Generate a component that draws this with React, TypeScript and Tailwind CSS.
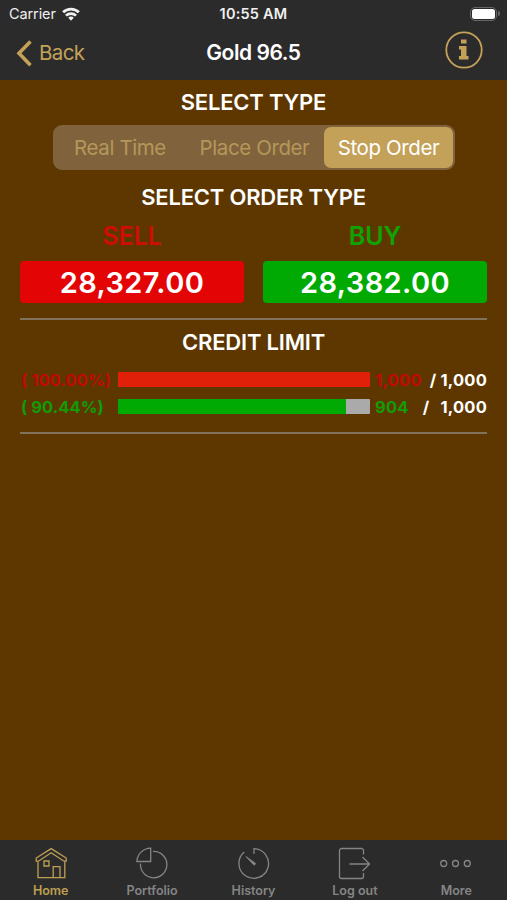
import type { ReactNode } from 'react'

type Side = {
  label: string
  price: string
  text: string
  fill: string
}

type Credit = {
  percent: string
  value: number
  used: string
  total: string
  text: string
  fill: string
  spacing: string
}

type TabItem = {
  label: string
  icon: ReactNode
  active?: boolean
}

/* =========================
   Data
========================= */
const TYPES = [
  { label: 'Real Time', width: 'w-[130px]' },
  { label: 'Place Order', width: 'w-[139px]' },
  { label: 'Stop Order', width: 'w-[129px]', active: true },
]

const SIDES: Side[] = [
  { label: 'SELL', price: '28,327.00', text: 'text-[#cf0d05]', fill: 'bg-[#e30505]' },
  { label: 'BUY', price: '28,382.00', text: 'text-[#0fa303]', fill: 'bg-[#00aa03]' },
]

const CREDITS: Credit[] = [
  { percent: '( 100.00%)', value: 100, used: '1,000', total: '1,000', text: 'text-[#c30803]', fill: 'bg-[#e02008]', spacing: 'gap-[4px]' },
  { percent: '( 90.44%)', value: 90.44, used: '904', total: '1,000', text: 'text-[#119c05]', fill: 'bg-[#00aa03]', spacing: 'gap-[11px]' },
]

const TABS: TabItem[] = [
  {
    label: 'Home',
    active: true,
    icon: (
      <>
        <path d="M2.2 14.2V11l15-9.4 15 9.4v3.2H30L17.2 5.8 4.4 14.2Z" />
        <path d="M4 14.5v16.2h26.8V14.5M19.200 30.500V19.700H26v10.800" />
        <path d="M10 14h5v5h-5z" />
      </>
    ),
  },
  {
    label: 'Portfolio',
    icon: (
      <>
        <path d="M15.7 1.2v13.3H1.9C2.3 6.8 8 1.6 15.7 1.2Z" />
        <path d="M18 4.4a13.2 13.2 0 1 1-12.500 12.200" />
      </>
    ),
  },
  {
    label: 'History',
    icon: (
      <>
        <path d="M7.3 5.1A14.8 14.8 0 1 0 17 1.700V7" />
        <path d="m9 9.5 9.200 6.600a1.200 1.200 0 0 1-1.600 1.700Z" fill="currentColor" strokeWidth="0.8" />
      </>
    ),
  },
  {
    label: 'Log out',
    icon: (
      <>
        <path d="M25.500 7.500v-4a2 2 0 0 0-2-2h-20a2 2 0 0 0-2 2v26a2 2 0 0 0 2 2h20a2 2 0 0 0 2-2V26" />
        <path d="M11.500 17h20M24.500 10l7 7-7 7" />
      </>
    ),
  },
  {
    label: 'More',
    icon: (
      <>
        <circle cx="4.7" cy="16.5" r="3" />
        <circle cx="16.5" cy="16.5" r="3" />
        <circle cx="28.3" cy="16.5" r="3" />
      </>
    ),
  },
]

/* =========================
   UI helpers
========================= */
function StatusBar() {
  return (
    <div className="grid h-[27px] grid-cols-3 items-center px-[7px] text-[#f0f0f0]">
      <div className="flex items-center gap-[6px] pl-[2px]">
        <span className="text-[14.5px] tracking-[-0.1px]">Carrier</span>
        <svg className="h-[14px] w-[18px]" viewBox="0 0 19 14" fill="none" stroke="currentColor" strokeWidth="2.9">
          <path d="M1.2 5.2a11.8 11.8 0 0 1 16.6 0" />
          <path d="M4.2 8.7a7.5 7.5 0 0 1 10.6 0" />
          <path d="m9.5 14-2.9-3a4 4 0 0 1 5.8 0Z" fill="currentColor" stroke="none" />
        </svg>
      </div>
      <span className="text-center text-[14.5px] font-semibold tracking-[0.2px] whitespace-nowrap">10:55 AM</span>
      <div className="flex items-center justify-end">
        <div className="rounded-[5px] border-[1.5px] border-[#666] p-px">
          <div className="h-[10px] w-[23px] rounded-[2.5px] bg-white" />
        </div>
        <div className="ml-px h-[5px] w-[2px] rounded-r-full bg-[#666]" />
      </div>
    </div>
  )
}

function NavBar() {
  return (
    <div className="grid h-[53px] grid-cols-3 items-center px-[16px]">
      <button className="flex items-center gap-[7px] pb-px text-[#c4a158]">
        <svg className="h-[27px] w-[16px]" viewBox="0 0 16 27" fill="none" stroke="currentColor" strokeWidth="3.6">
          <path d="M14.5 1.5 3 13.2l11.5 12" />
        </svg>
        <span className="text-[20.5px] tracking-[-0.6px]">Back</span>
      </button>
      <h1 className="pb-px text-center text-[21px] font-semibold tracking-[-0.45px] whitespace-nowrap text-white">Gold 96.5</h1>
      <button className="justify-self-end pr-[8px] pb-[7px] text-[#c4a158]" aria-label="Information">
        <svg className="size-[38px]" viewBox="0 0 38 38" fill="none">
          <circle cx="19" cy="19" r="17.7" stroke="currentColor" strokeWidth="1.8" />
          <path d="M16 8.5h5.5v4H16zM14 15h7.5v10h2v3.5H14V25h2v-6.500h-2z" fill="currentColor" />
        </svg>
      </button>
    </div>
  )
}

function Heading({ children }: { children: ReactNode }) {
  return <h2 className="text-center text-[22px] leading-[28px] font-semibold tracking-[-0.2px] text-white">{children}</h2>
}

function SideColumn({ side }: { side: Side }) {
  return (
    <div className="text-center">
      <div className={`text-[25px] leading-[33px] font-semibold tracking-[-0.1px] ${side.text}`}>{side.label}</div>
      <button className={`mt-[8px] h-[42px] w-full rounded-[4px] pb-px text-[29px] font-semibold tracking-[0.4px] text-white ${side.fill}`}>
        {side.price}
      </button>
    </div>
  )
}

function CreditRow({ credit }: { credit: Credit }) {
  return (
    <div className="flex h-[27px] items-center text-[16.5px] leading-[22px] font-bold tracking-[0.2px]">
      <span className={`w-[98px] pt-px pl-px tracking-[0.05px] whitespace-nowrap ${credit.text}`}>{credit.percent}</span>
      <div className="h-[15px] w-[252px] overflow-hidden rounded-r-[1px] bg-[#aaa]">
        <div className={`h-full ${credit.fill}`} style={{ width: `${credit.value}%` }} />
      </div>
      <span className={`pt-px pl-[5px] ${credit.text}`}>{credit.used}</span>
      <div className={`flex flex-1 justify-end pt-px text-white ${credit.spacing}`}>
        <span>/</span>
        <span>{credit.total}</span>
      </div>
    </div>
  )
}

function Tab({ tab }: { tab: TabItem }) {
  return (
    <button className={`flex flex-1 flex-col items-center pt-[7px] ${tab.active ? 'text-[#bfa052]' : 'text-[#858585]'}`}>
      <svg className="size-[34px]" viewBox="0 0 34 34" fill="none" stroke="currentColor" strokeWidth="1.3">
        {tab.icon}
      </svg>
      <span className="mt-[2px] text-[12.5px] leading-[16px] font-semibold">{tab.label}</span>
    </button>
  )
}

/* =========================
   Screen
========================= */
export default function App() {
  return (
    <div className="flex h-[900px] w-[507px] flex-col overflow-hidden bg-[#5e3700] font-['Inter',sans-serif]">
      <header className="h-[80px] bg-[#2b2b2b]">
        <StatusBar />
        <NavBar />
      </header>

      <main className="flex-1 px-[20px] pt-[8px]">
        <Heading>SELECT TYPE</Heading>
        <div className="mt-[9px] ml-[33px] flex h-[45px] w-[402px] items-center rounded-[9px] bg-[#80633c] p-[2px]">
          {TYPES.map((t) => (
            <button
              key={t.label}
              className={`h-[41px] rounded-[7px] pt-[2px] text-[20.5px] tracking-[-0.4px] whitespace-nowrap ${t.width} ${t.active ? 'bg-[#c4a158] text-white' : 'text-[#b5975a]'}`}
            >
              {t.label}
            </button>
          ))}
        </div>

        <div className="mt-[13px]">
          <Heading>SELECT ORDER TYPE</Heading>
        </div>
        <div className="mt-[9px] grid grid-cols-2 gap-[19px]">
          {SIDES.map((s) => (
            <SideColumn key={s.label} side={s} />
          ))}
        </div>

        <section className="mt-[15px] border-y-2 border-[#80705c] pt-[8px] pb-[12px]">
          <Heading>CREDIT LIMIT</Heading>
          <div className="mt-[10px]">
            {CREDITS.map((c) => (
              <CreditRow key={c.percent} credit={c} />
            ))}
          </div>
        </section>
      </main>

      <nav className="flex h-[60px] bg-[#2b2b2b]">
        {TABS.map((t) => (
          <Tab key={t.label} tab={t} />
        ))}
      </nav>
    </div>
  )
}
